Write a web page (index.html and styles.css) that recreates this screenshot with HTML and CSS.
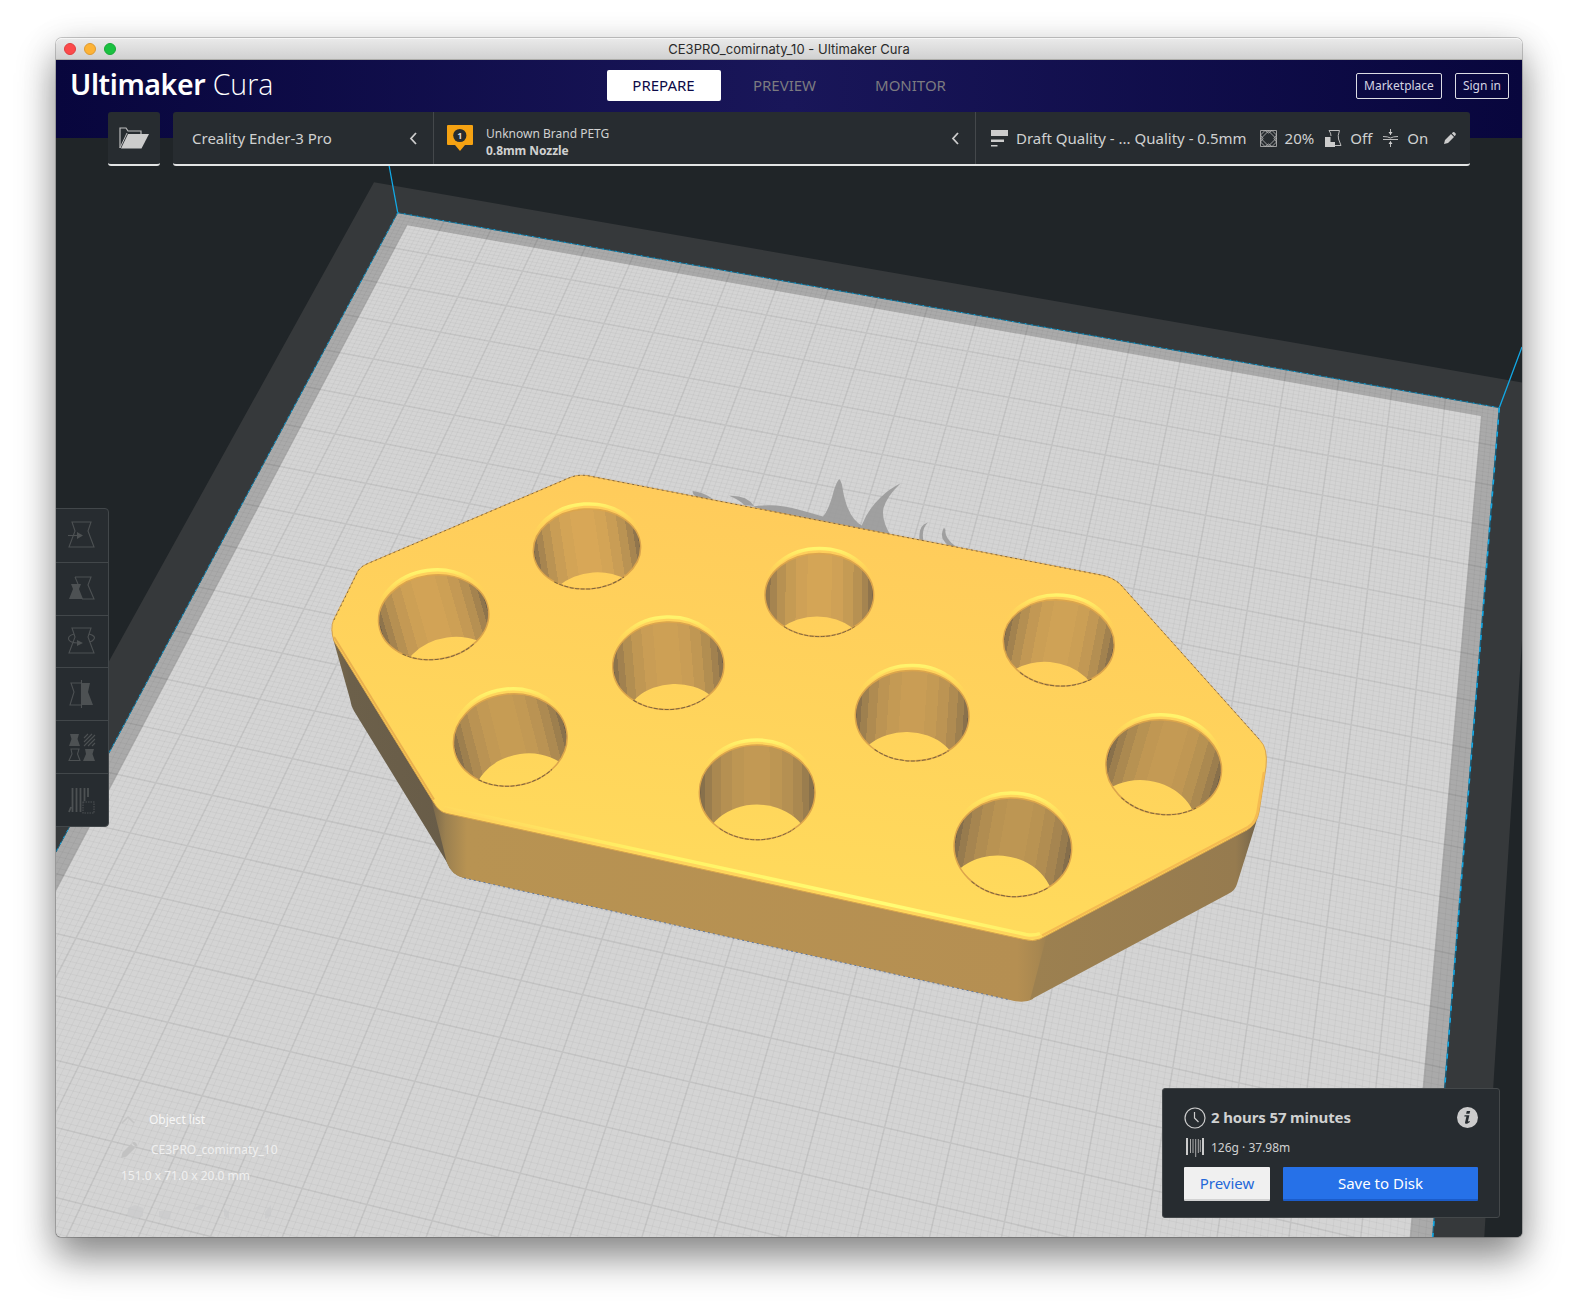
FILE: index.html
```html
<!DOCTYPE html>
<html lang="en">
<head>
<meta charset="utf-8">
<title>CE3PRO_comirnaty_10 - Ultimaker Cura</title>
<link rel="stylesheet" href="styles.css">
</head>
<body>
<div class="window">
  <div class="titlebar">
    <div class="lights"><i class="light red"></i><i class="light amber"></i><i class="light green"></i></div>
    <span class="title">CE3PRO_comirnaty_10 - Ultimaker Cura</span>
  </div>
  <main class="app">
    <svg class="scene" viewBox="56 60 1466 1177" id="scene" aria-hidden="true">
      <defs>
        <linearGradient id="top" x1="700" y1="475" x2="640" y2="930" gradientUnits="userSpaceOnUse"><stop offset="0" stop-color="#ffcb5b"/><stop offset="1" stop-color="#ffdc5c"/></linearGradient>
        <linearGradient id="front" x1="430" y1="0" x2="1048" y2="0" gradientUnits="userSpaceOnUse"><stop offset="0" stop-color="#75654a"/><stop offset=".025" stop-color="#9b8050"/><stop offset=".06" stop-color="#b89352"/><stop offset=".95" stop-color="#b58f52"/><stop offset=".985" stop-color="#a88750"/><stop offset="1" stop-color="#9c8050"/></linearGradient>
        <linearGradient id="right" x1="1035" y1="0" x2="1258" y2="0" gradientUnits="userSpaceOnUse"><stop offset="0" stop-color="#9c8050"/><stop offset=".9" stop-color="#967b4f"/><stop offset=".95" stop-color="#85704d"/><stop offset="1" stop-color="#6f6149"/></linearGradient>
        <linearGradient id="left" x1="332" y1="0" x2="450" y2="0" gradientUnits="userSpaceOnUse"><stop offset="0" stop-color="#7b6a4b"/><stop offset=".15" stop-color="#6c604a"/><stop offset="1" stop-color="#685c48"/></linearGradient>
        <linearGradient id="shine" x1="440" y1="0" x2="1040" y2="0" gradientUnits="userSpaceOnUse"><stop offset="0" stop-color="#ffe063" stop-opacity=".2"/><stop offset=".35" stop-color="#fff264"/><stop offset=".75" stop-color="#fffc74"/><stop offset="1" stop-color="#ffee66"/></linearGradient>
        <linearGradient id="rim" x1="0" y1="0" x2="0" y2="1"><stop offset="0" stop-color="#fff46c"/><stop offset=".12" stop-color="#ffe560" stop-opacity=".75"/><stop offset=".35" stop-color="#ffd050" stop-opacity="0"/></linearGradient>
      </defs>
      <rect x="56" y="60" width="1466" height="1177" fill="#202528"/>
      <path d="M374 182.300L1522 382.500V640L1494.300 1070L1484.300 1237H56V757Z" fill="#36393b"/>
      <g id="plate"></g>
      <g fill="none" stroke="#12a9e6" stroke-width="1">
        <path d="M389 165L397.700 212.700M1499.300 407.700L1522 347" stroke-width="1.300"/>
        <path d="M397.700 212.700L1499.300 407.700" stroke="#1b6480"/><path d="M397.700 212.700L1499.300 407.700" stroke-dasharray="1.500 5"/>
        <path d="M397.700 212.700L56 852" stroke="#1b6480"/><path d="M397.700 212.700L56 852" stroke-dasharray="2 5"/>
        <path d="M1499.300 407.700L1432.700 1237" stroke="#1d5d78" stroke-width="1.400"/><path d="M1499.300 407.700L1432.700 1237" stroke-dasharray="5 7" stroke-width="1.600"/>
      </g>
      <g fill="#969696" fill-opacity=".85">
        <path d="M753 506.400Q777 503 800 510L823 516.400Q829 510 834 490Q837 481 839.300 479Q842 482 843 491Q848 518 861.700 525.400Q868 509 881 497Q889 489 900.700 483.200Q887 496 883.500 508Q881 520 891 536L790 518Z"/>
        <path d="M692.700 491Q703 492 713 499L698 497.500Q692 495 692.700 491ZM729 495.700Q747 495 754 506L744 505Q740 500 729 495.700ZM928 522.500Q918 525 919.500 540L923.500 541Q921 529 928 522.500ZM944 527.500Q938 538 949 546L957 547.500Q944 538 945.500 530Z"/>
      </g>
      <g id="part">
        <path d="M331.700 630L334 642L350 699Q351 706 354 711L446.700 862Q452 875 464 878L460 805L420 740Z" fill="url(#left)"/>
        <path d="M431 798L446.700 862Q451 875 464 878L1010 1000Q1024 1004 1033 999L1048 932L700 860Z" fill="url(#front)"/>
        <path d="M1048 930L1030 1000L1228 894Q1235 891 1237 884L1256 823L1259 805Z" fill="url(#right)"/>
        <path d="M464 878L1010 1000" stroke="#5470a0" stroke-width=".9" stroke-dasharray="2 3"/>
        <path d="M570 477.500Q580 473.500 592 476.500L1101 575Q1112 577 1120 584L1260 740.400Q1268 748 1266 767L1259 812Q1257 824 1247 830L1040 939Q1033 942 1024 939.500L447 813.500Q439 812 434 803L334 641Q330 629 333.500 620L358 571Q361 566 369 563Z" fill="url(#top)" stroke="#d9a44c" stroke-width="1"/>
        <path d="M444 809.500L1026 936.500Q1035 938 1041 935" fill="none" stroke="#ffd45c" stroke-width="4"/>
        <path d="M444 807.500L1026 934.500Q1034 936 1040 933.500" fill="none" stroke="url(#shine)" stroke-width="3.500"/>
        <path d="M1042 935.500L1248 827Q1257 822 1258.500 806L1264 772" fill="none" stroke="#f5bb51" stroke-width="2.500"/>
        <path d="M434 799.500L334 637" fill="none" stroke="#eab14e" stroke-width="2"/>
        <path d="M334 620L358 571Q361 566 369 563L570 477.500Q580 473.500 592 476.500L1101 575Q1112 577 1120 584L1260 740" fill="none" stroke="#6b583a" stroke-width=".8" stroke-dasharray="2 3"/>
        <g id="holes"></g>
      </g>
    </svg>

    <header class="navbar">
      <div class="brand"><b>Ultimaker</b> <span>Cura</span></div>
      <nav class="stages"><a class="stage active">PREPARE</a><a class="stage">PREVIEW</a><a class="stage">MONITOR</a></nav>
      <div class="account"><button class="outline">Marketplace</button><button class="outline">Sign in</button></div>
    </header>

    <section class="stagebar">
      <button class="open"><svg width="30" height="22" viewBox="0 0 30 22"><path d="M1 21V1h6l2 3h13v4" fill="none" stroke="#bdbdbd" stroke-width="1.200"/><path d="M9 7H30L22.500 21.500H2Z" fill="#ccc"/><path d="M1 21L8 6" stroke="#bdbdbd"/></svg></button>
      <div class="settings">
        <div class="cell machine"><span>Creality Ender-3 Pro</span><svg class="chev" width="8" height="13" viewBox="0 0 8 13"><path d="M7 1L2 6.500L7 12"/></svg></div>
        <div class="cell material">
          <svg width="26" height="26" viewBox="0 0 26 26"><path d="M1 0H25Q26 0 26 1V19Q26 20 25 20H18L13 26L8 20H1Q0 20 0 19V1Q0 0 1 0Z" fill="#f5a212"/><circle cx="12.800" cy="10.500" r="6.600" fill="#272c30"/><text x="12.800" y="14" class="badge">1</text></svg>
          <div class="lines"><span>Unknown Brand PETG</span><b>0.8mm Nozzle</b></div>
          <svg class="chev" width="8" height="13" viewBox="0 0 8 13"><path d="M7 1L2 6.500L7 12"/></svg>
        </div>
        <div class="cell profile">
          <svg class="i-quality" width="17" height="17" viewBox="0 0 17 17" fill="#ccc"><path d="M0 0h17v6H0zM0 9.500h13v2.500H0zM0 15h6.500v1.500H0z"/></svg>
          <span class="quality">Draft Quality - ... Quality - 0.5mm</span>
          <svg class="i-infill" width="17" height="17" viewBox="0 0 17 17" fill="none" stroke="#bbb" stroke-width=".8"><path d="M.5.5h16v16H.5zM.5 5L5 .5M.5 9L9 .5M12 .5L16.500 5M8 .5L16.500 9M.5 8L9 16.500M16.500 8L8 16.500M.5 12L5 16.500M16.500 12L12 16.500M.5 5L3 8.500L.5 12M16.500 5L14 8.500L16.500 12M5 .5L8.500 3L12 .5M5 16.500L8.500 14L12 16.500"/></svg>
          <span class="infill">20%</span>
          <svg class="i-support" width="17" height="17" viewBox="0 0 17 17"><path d="M4 .5H14.500Q12.500 6 13.500 9L16 15.500H9.500M4 .5Q6 3 6 6" fill="none" stroke="#bbb"/><path d="M0 7H5.500V12H10V17H0Z" fill="#ccc"/></svg>
          <span class="support">Off</span>
          <svg class="i-adhesion" width="15" height="18" viewBox="0 0 15 18"><path d="M0 7.500Q5 7.500 7.500 9Q10 7.500 15 7.500M0 10.500H15M7.500 0V6M7.500 12.500V18" stroke="#bbb" fill="none"/><path d="M5.500 3h4L7.500 6zM5.500 15h4L7.500 12z" fill="#ccc"/></svg>
          <span class="adhesion">On</span>
          <svg class="i-pen" width="12" height="12" viewBox="0 0 12 12" fill="#ccc"><path d="M0 12L1 8L7 2L10 5L4 11ZM7.800 1.200L9 .2Q10 -.3 11 .8Q12.300 2 11.600 3L10.700 4.200Z"/></svg>
        </div>
      </div>
    </section>

    <aside class="tools">
      <div><svg viewBox="0 0 28 28"><path d="M4 1H23L20 10L26 26H1L7 10Z"/><path d="M0 14.500H12"/><path class="f" d="M9 11L15 14.500L9 18Z"/></svg></div>
      <div><svg viewBox="0 0 28 28"><path d="M7 3H23L20 11L26 25H14M7 3L10 10"/><path class="f" d="M3 10H13L11 15L15 25H1L5 15Z"/></svg></div>
      <div><svg viewBox="0 0 28 28"><path d="M4 1H23L20 10L26 26H1L7 10ZM6 7Q-1 9 1 13Q3 16 10 16M21 7Q28 9 26 12Q25 14 22 15"/><path class="f" d="M9 13L15 16L9 19Z"/></svg></div>
      <div><svg viewBox="0 0 28 28"><path d="M13 3H3L6 12L2 25H13M13.500 0V28"/><path class="f" d="M14 3H22L20 12L25 25H14Z"/></svg></div>
      <div><svg viewBox="0 0 28 28"><path class="f" d="M2 1H11L9.500 6L12 13H1L3.500 6ZM17 16H26L24.500 21L27 28H15L18 21Z"/><path d="M3 16H11L9.500 21L12 27.500H1L4 21ZM16 5L20 1M16 9L24 1M16 13L27 2M20 13L27 6M24 13L27 10"/></svg></div>
      <div><svg viewBox="0 0 28 28"><path d="M4.500 2V26M8.500 2V26M12.500 2V26M16.500 2V15M20 2V11M1 26L3 21" stroke-width="1.800"/><path d="M15 16H26V27H15Z" stroke-dasharray="1.500 1"/></svg></div>
    </aside>

    <section class="objects">
      <div class="row head"><svg width="14" height="10" viewBox="0 0 14 10"><path d="M1 8L7 2L13 8" fill="none" stroke="#c5c5c5" stroke-width="1.500"/></svg><span>Object list</span></div>
      <div class="row file"><svg width="16" height="16" viewBox="0 0 16 16" fill="#c2c2c2"><path d="M0 16L1.500 10.500L10 2L14 6L5.500 14.500ZM11 1Q13-1 15 1T15 5Z"/></svg><span>CE3PRO_comirnaty_10</span></div>
      <div class="dims">151.0 x 71.0 x 20.0 mm</div>
      <svg class="views" width="150" height="17" viewBox="0 0 150 17" fill="#c9cacb"><path d="M0 4L7 1L15 4V12L7 16L0 12ZM31 7H43L42 15L36 16L31 13ZM65 5L72 1H77L72 6ZM96 4L101 8V15L96 12ZM137 8L143 1V12L137 15Z"/></svg>
    </section>

    <section class="job">
      <div class="time"><svg width="22" height="22" viewBox="0 0 22 22" fill="none" stroke="#ccc" stroke-width="1.200"><circle cx="11" cy="11" r="10"/><path d="M10.500 5V11L14.500 15"/></svg><b>2 hours 57 minutes</b><svg class="info" width="21" height="21" viewBox="0 0 21 21"><circle cx="10.500" cy="10.500" r="10.500" fill="#ccc"/><path d="M9.800 4h3.400l-.7 2.800H9.100zM7.600 8.300h4.800l-1.500 6.200 2-.5-.3 1.200-2.500 1.500H8.400L8 15.500l1.400-6H7.300z" fill="#272c30"/></svg></div>
      <div class="usage"><svg width="18" height="19" viewBox="0 0 18 19" stroke="#ccc" fill="none"><path d="M1 0V17M17 0V17" stroke-width="2"/><path d="M4.500 1V15M7 1V15M9.700 1V19M12.300 1V15M14.300 2V14" stroke="#aaa"/></svg><span>126g · 37.98m</span></div>
      <div class="actions"><button class="preview">Preview</button><button class="save">Save to Disk</button></div>
    </section>
  </main>
</div>
<script src="scene.js"></script>
</body>
</html>
```
FILE: styles.css
```css
* { box-sizing: border-box; }
body { margin: 0; height: 1311px; overflow: hidden; background: #fff; font-family: "Noto Sans", "Open Sans", sans-serif; color: #d0d1d1; }
button { font: inherit; padding: 0; border: 0; }
svg { display: block; flex: none; }

.window { width: 1466px; height: 1199px; margin: 38px 0 0 56px; border-radius: 6px 6px 5px 5px; box-shadow: 0 0 0 1px rgba(0,0,0,.2), 0 21px 38px rgba(0,0,0,.42), 0 6px 36px rgba(0,0,0,.12); }
.titlebar { display: grid; grid-template-columns: 1fr auto 1fr; align-items: center; height: 22px; border-radius: 6px 6px 0 0; border-bottom: 1px solid #acaca8; border-top: 1px solid #f6f6f6; background: linear-gradient(#e9e9e9, #d1d1d1); }
.lights { display: flex; gap: 8px; padding-left: 8px; }
.light { width: 12px; height: 12px; border-radius: 50%; }
.red { background: #fc4a4b; border: 1px solid #e03f3e; }
.amber { background: #fdb336; border: 1px solid #de9a31; }
.green { background: #1ac140; border: 1px solid #17a936; }
.title { font: 13px/20px Inter, sans-serif; color: #2a2a2a; letter-spacing: .02px; white-space: nowrap; }

.app { position: relative; height: 1177px; overflow: hidden; border-radius: 0 0 5px 5px; background: #202528; }
.scene { position: absolute; inset: 0; width: 1466px; height: 1177px; }

.navbar { position: relative; display: grid; grid-template-columns: 1fr auto 1fr; height: 78px; padding: 10px 13px 0 14px; align-items: start; background: linear-gradient(90deg, #08063d, #191659 50%, #08063d); }
.brand { font-size: 28.500px; line-height: 29px; color: #fff; white-space: nowrap; }
.brand b { font-weight: 600; letter-spacing: -.4px; }
.brand span { font-family: "Open Sans", sans-serif; font-weight: 300; letter-spacing: 0; }
.stages { display: flex; padding-right: 5px; }
.stage { width: 114px; height: 31px; margin-right: 7px; text-align: center; font-size: 15px; line-height: 31px; color: #7c7b80; border-radius: 2px; }
.stage:nth-child(2) { margin-right: 12px; }
.stage:last-child { margin-right: 0; }
.stage.active { background: #fff; color: #0d0a48; }
.account { display: flex; justify-content: flex-end; gap: 13px; padding-top: 3px; }
.outline { height: 26px; padding: 0 7px 2px; border: 1px solid #dcdce4; border-radius: 2px; background: transparent; color: #d4d4e2; font-size: 12px; }

.stagebar { position: relative; display: flex; gap: 13px; margin: -26px 52px 0; height: 54px; }
.open { display: grid; place-items: center; width: 52px; padding-right: 1px; }
.open, .settings { background: #272c30; border-bottom: 2px solid #e2e4e4; border-radius: 3px; }
.settings { flex: 1; display: flex; font-size: 15px; }
.cell { display: flex; align-items: center; }
.cell + .cell { border-left: 1px solid #44484b; }
.chev { margin-left: auto; fill: none; stroke: #ccc; stroke-width: 1.8; }
.machine { width: 260px; padding: 0 16px 0 19px; }
.material { width: 542px; padding: 0 16px 0 13px; font-size: 12px; }
.lines { display: flex; flex-direction: column; padding: 7px 0 0 13px; line-height: 17px; }
.lines b { letter-spacing: -.05px; }
.badge { font-size: 9px; font-weight: 700; text-anchor: middle; fill: #ddd; }
.profile { padding-left: 15px; white-space: nowrap; }
.quality { margin: 0 13px 0 8px; }
.infill { margin: 0 11px 0 8px; }
.support { margin: 0 11px 0 8px; }
.adhesion { margin: 0 16px 0 9px; }

.tools { position: absolute; left: -1px; top: 448px; width: 54px; height: 319px; display: grid; grid-template-rows: repeat(6, 1fr); border: 1px solid #42474a; border-radius: 0 4px 4px 0; background: #272c30; }
.tools div { display: grid; place-items: center; padding-bottom: 1px; }
.tools div + div { border-top: 1px solid #42474a; }
.tools svg { width: 28px; height: 28px; fill: none; stroke: #4d5153; stroke-width: 1.1; }
.tools .f { fill: #4d5153; stroke: none; }

.objects { position: absolute; left: 65px; bottom: 16px; font-size: 12px; line-height: 16px; color: #f7f7f7; }
.row { display: flex; align-items: center; }
.head { gap: 14px; margin-bottom: 14px; }
.file { gap: 14px; margin-bottom: 10px; color: #f0f0f0; }
.dims { color: #f0f0f0; }
.views { margin: 20px 0 0 7px; opacity: .6; }

.job { position: absolute; left: 1106px; top: 1028px; width: 338px; height: 130px; padding: 18px 21px; border: 1px solid #44484a; border-radius: 3px; background: #272c30; }
.time, .usage, .actions { display: flex; align-items: center; }
.time { gap: 5px; height: 21px; font-size: 15px; }
.time b { font-weight: 700; letter-spacing: -.13px; margin-top: -2px; }
.info { margin-left: auto; }
.usage { gap: 7px; height: 20px; margin: 9px 0 10px 2px; font-size: 12px; }
.actions { gap: 13px; font-size: 15px; }
.preview, .save { height: 34px; border-radius: 1px; }
.preview { width: 86px; background: #f0f0f0; color: #2468d8; border-bottom: 2px solid #d2d2d2; }
.save { flex: 1; background: #2671e8; color: #fff; border-bottom: 2px solid #1b5cca; }
```
FILE: scene.js
```js
const NS = 'http://www.w3.org/2000/svg';
function add(parent, tag, attrs) {
  const el = document.createElementNS(NS, tag);
  for (const k in attrs) el.setAttribute(k, attrs[k]);
  parent.appendChild(el);
  return el;
}

// Bed coordinates (one unit = 10 mm) projected to the screen.
function project(u, v) {
  const w = 1 - 0.0033 * u - 0.0132 * v;
  return [(397.7 + 45.12 * u - 22.6 * v) / w, (212.7 + 7.518 * u + 29.67 * v) / w];
}
function quad(a, b, c, d) {
  return [[a, b], [c, b], [c, d], [a, d]].map(p => project(p[0], p[1]).map(n => n.toFixed(2)).join(' ')).join(',');
}
const plate = document.getElementById('plate');
add(plate, 'polygon', { points: quad(0, 0, 22, 22), fill: '#aaaaaa' });
add(plate, 'polygon', { points: quad(.32, .3, 21.68, 21.7), fill: '#d4d4d4' });
let minor = '', major = '';
for (let i = 1; i < 220; i++) {
  const t = i / 10;
  const seg = 'M' + project(t, 0) + 'L' + project(t, 22) + 'M' + project(0, t) + 'L' + project(22, t);
  if (i % 10) minor += seg; else major += seg;
}
add(plate, 'path', { d: minor, fill: 'none', stroke: '#000', 'stroke-opacity': .045, 'stroke-width': .9 });
add(plate, 'path', { d: major, fill: 'none', stroke: '#000', 'stroke-opacity': .08, 'stroke-width': 1.5 });

// left, right, top, bottom, floor x, floor y, rotation
const holes = [
  [533.3, 640.7, 509, 589, 593, 572.5, -4], [378.3, 489, 575, 659.5, 447, 637.5, -8],
  [612.7, 724, 622, 709.5, 673, 684, -2], [453.3, 567.3, 694, 786, 520, 754, -8],
  [699.3, 815, 745, 839.8, 757, 804.6, 0], [765, 873.7, 553.5, 636.6, 817, 616.4, 0],
  [1003.3, 1114.3, 600, 686, 1050, 662, 5], [855.3, 969, 670.5, 761, 907.5, 732, 1],
  [1105.7, 1221.7, 720, 814.5, 1149, 780.7, 8], [954, 1071.7, 798, 896.6, 1003, 855.7, 5]
];
const defs = document.querySelector('#scene defs');
const group = document.getElementById('holes');
const mix = (a, b, t) => 'rgb(' + a.map((n, i) => Math.round(n + (b[i] - n) * t)) + ')';
holes.forEach((h, n) => {
  const [l, r, t, b, fx, fy, rot] = h;
  const cx = (l + r) / 2, cy = (t + b) / 2, rx = (r - l) / 2, ry = (b - t) / 2;
  const turn = 'rotate(' + rot + ' ' + cx + ' ' + cy + ')';
  const depth = Math.min(1, (cy - 547) / 300);
  const lit = [217 - 28 * depth, 168 - 18 * depth, 87 - 4 * depth];
  const grad = add(defs, 'linearGradient', {
    id: 'wall' + n, gradientUnits: 'userSpaceOnUse', x1: l, x2: r, y1: cy, y2: cy,
    gradientTransform: 'translate(' + cx + ' ' + cy + ') skewX(' + Math.atan((790 - cx) / 2550) * 57.3 + ') translate(' + -cx + ' ' + -cy + ')'
  });
  const facets = 14;
  for (let i = 0; i < facets; i++) {
    const a = Math.PI * i / facets, z = Math.PI * (i + 1) / facets;
    const shade = Math.pow(Math.sin((a + z) / 2), .85);
    const color = mix([98, 85, 70], lit, shade);
    add(grad, 'stop', { offset: (1 - Math.cos(a)) / 2, 'stop-color': color });
    add(grad, 'stop', { offset: (1 - Math.cos(z)) / 2, 'stop-color': color });
  }
  const clip = add(defs, 'clipPath', { id: 'clip' + n });
  add(clip, 'ellipse', { cx, cy, rx, ry, transform: turn });
  add(group, 'ellipse', { cx, cy: cy - 2, rx: rx + 1, ry: ry + 3, transform: turn, fill: 'none', stroke: 'url(#rim)', 'stroke-width': 3.5 });
  add(group, 'ellipse', { cx, cy, rx, ry, transform: turn, fill: 'url(#wall' + n + ')' });
  const floor = add(group, 'g', { 'clip-path': 'url(#clip' + n + ')' });
  add(floor, 'ellipse', { cx: fx, cy: fy + ry * .95, rx: rx * .93, ry: ry * .95, transform: 'rotate(' + rot + ' ' + fx + ' ' + fy + ')', fill: 'url(#top)' });
  add(group, 'ellipse', { cx, cy, rx, ry, transform: turn, fill: 'none', stroke: '#dca54c', 'stroke-width': 1.5 });
  add(group, 'path', { d: 'M' + (cx - rx * .65) + ' ' + (cy + ry * .76) + 'A' + rx + ' ' + ry + ' 0 0 0 ' + (cx + rx * .65) + ' ' + (cy + ry * .76), transform: turn, fill: 'none', stroke: '#7d663d', 'stroke-width': 1, 'stroke-dasharray': '4 1.500' });
});
```
